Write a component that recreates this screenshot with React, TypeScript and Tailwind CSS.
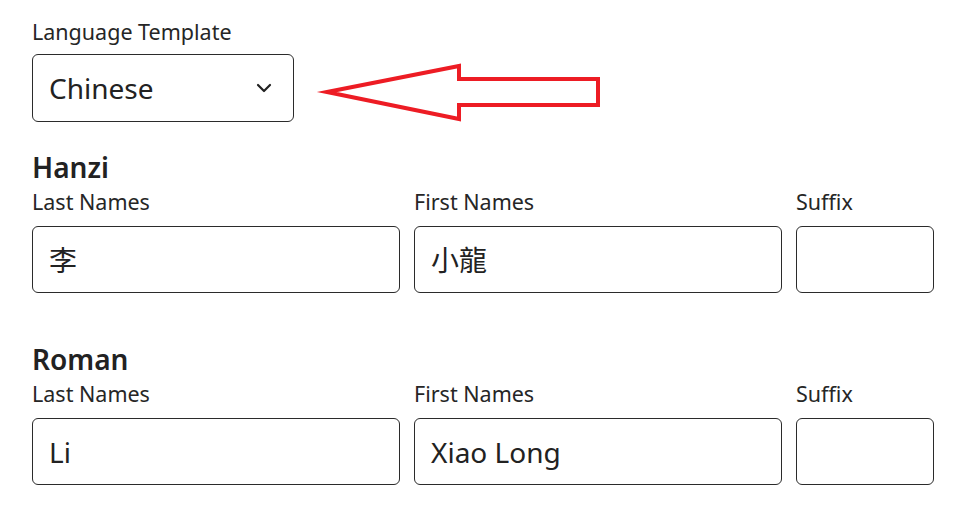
const font = "font-['Noto_Sans','Noto_Sans_CJK_TC',sans-serif]"

function Field({ label, value, w }: { label: string; value: string; w: string }) {
  return (
    <div className={`flex flex-col ${w}`}>
      <label className="text-[21.5px] leading-[24px] text-[#262626]">{label}</label>
      <div className="mt-[12px] flex h-[67px] items-center rounded-[6px] border border-[#2b2b2b] px-4 text-[28px] text-[#222]">
        {value}
      </div>
    </div>
  )
}

function NameGroup({ title, last, first, className }: { title: string; last: string; first: string; className: string }) {
  return (
    <section className={className}>
      <h2 className="text-[28px] font-semibold leading-[32px] text-[#222]">{title}</h2>
      <div className="mt-[7px] flex gap-[14px]">
        <Field label="Last Names" value={last} w="w-[368px]" />
        <Field label="First Names" value={first} w="w-[368px]" />
        <Field label="Suffix" value="" w="w-[138px]" />
      </div>
    </section>
  )
}

export default function App() {
  return (
    <div className={`${font} h-[506px] w-[954px] bg-white pl-[32px] pt-[20px]`}>
      <label className="block text-[21.5px] leading-[24px] text-[#262626]">Language Template</label>
      <div className="mt-[10px] flex items-start">
        <div className="flex h-[68px] w-[262px] items-center justify-between rounded-[6px] border border-[#2b2b2b] pl-4 pr-[21px] text-[28px] text-[#222]">
          <span>Chinese</span>
          <svg width="16" height="10" viewBox="0 0 16 10" fill="none">
            <path d="M2 2 L8 8 L14 2" stroke="#222" strokeWidth="2.2" strokeLinecap="round" strokeLinejoin="round" />
          </svg>
        </div>
        {/* red callout arrow, viewBox matches page coordinates */}
        <svg width="314" height="70" viewBox="294 54 314 70">
          <polygon
            points="327,92 459,66 459,79 598,79 598,105 459,105 459,119"
            fill="none"
            stroke="#ed1c24"
            strokeWidth="4"
            strokeLinejoin="miter"
            strokeMiterlimit="10"
          />
        </svg>
      </div>
      <NameGroup title="Hanzi" last="李" first="小龍" className="mt-[27px]" />
      <NameGroup title="Roman" last="Li" first="Xiao Long" className="mt-[50px]" />
    </div>
  )
}
